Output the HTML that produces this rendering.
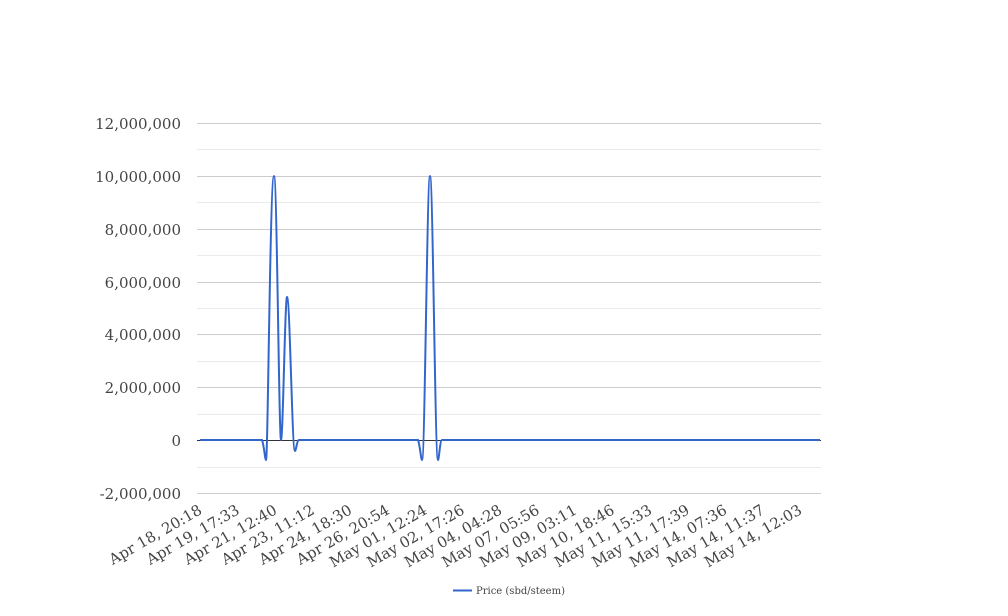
<!DOCTYPE html>
<html><head><meta charset="utf-8"><style>
html,body{margin:0;padding:0;background:#fff;width:1008px;height:616px;overflow:hidden}
svg{display:block}
text{font-family:"DejaVu Serif","Liberation Serif",serif;fill:#444}
</style></head><body>
<svg width="1008" height="616" viewBox="0 0 1008 616">
<g stroke="#ebebeb" stroke-width="1">
<line x1="197" x2="821" y1="149.5" y2="149.5"/><line x1="197" x2="821" y1="202.5" y2="202.5"/>
<line x1="197" x2="821" y1="255.5" y2="255.5"/><line x1="197" x2="821" y1="308.5" y2="308.5"/>
<line x1="197" x2="821" y1="361.5" y2="361.5"/><line x1="197" x2="821" y1="414.5" y2="414.5"/>
<line x1="197" x2="821" y1="467.5" y2="467.5"/>
</g>
<g stroke="#ccc" stroke-width="1">
<line x1="197" x2="821" y1="123.5" y2="123.5"/><line x1="197" x2="821" y1="176.5" y2="176.5"/>
<line x1="197" x2="821" y1="229.5" y2="229.5"/><line x1="197" x2="821" y1="282.5" y2="282.5"/>
<line x1="197" x2="821" y1="334.5" y2="334.5"/><line x1="197" x2="821" y1="387.5" y2="387.5"/>
<line x1="197" x2="821" y1="493.5" y2="493.5"/>
</g>
<line x1="197" x2="821" y1="440.5" y2="440.5" stroke="#333"/>
<g font-size="15" text-anchor="end">
<text x="181" y="129">12,000,000</text><text x="181" y="182">10,000,000</text>
<text x="181" y="235">8,000,000</text><text x="181" y="288">6,000,000</text>
<text x="181" y="340">4,000,000</text><text x="181" y="393">2,000,000</text>
<text x="181" y="446">0</text><text x="181" y="499">-2,000,000</text>
</g>
<path fill="none" stroke="#3366cc" stroke-width="2" d="M200 440 L262 440 C264 445 265 460 266 460 C268 460 270 176 274 176 C277 176 279 440 281 440 C283 440 285 297 287 297 C290 297 292 451 295 451 C296 451 297 440 299 440 L418 440 C420 445 421 460 422 460 C425 460 427 176 430 176 C433 176 435 460 438 460 C439 460 440 440 442 440 L820 440"/>
<g font-size="15" text-anchor="end">
<text transform="translate(203,513) rotate(-30)">Apr 18, 20:18</text>
<text transform="translate(240.5,513) rotate(-30)">Apr 19, 17:33</text>
<text transform="translate(278,513) rotate(-30)">Apr 21, 12:40</text>
<text transform="translate(315.5,513) rotate(-30)">Apr 23, 11:12</text>
<text transform="translate(353,513) rotate(-30)">Apr 24, 18:30</text>
<text transform="translate(390.5,513) rotate(-30)">Apr 26, 20:54</text>
<text transform="translate(428,513) rotate(-30)">May 01, 12:24</text>
<text transform="translate(465.5,513) rotate(-30)">May 02, 17:26</text>
<text transform="translate(503,513) rotate(-30)">May 04, 04:28</text>
<text transform="translate(540.5,513) rotate(-30)">May 07, 05:56</text>
<text transform="translate(578,513) rotate(-30)">May 09, 03:11</text>
<text transform="translate(615.5,513) rotate(-30)">May 10, 18:46</text>
<text transform="translate(653,513) rotate(-30)">May 11, 15:33</text>
<text transform="translate(690.5,513) rotate(-30)">May 11, 17:39</text>
<text transform="translate(728,513) rotate(-30)">May 14, 07:36</text>
<text transform="translate(765.5,513) rotate(-30)">May 14, 11:37</text>
<text transform="translate(803,513) rotate(-30)">May 14, 12:03</text>
</g>
<line x1="453" x2="472" y1="590.5" y2="590.5" stroke="#3366cc" stroke-width="2"/>
<text x="476" y="594" font-size="10" fill="#222">Price (sbd/steem)</text>
</svg>
</body></html>
